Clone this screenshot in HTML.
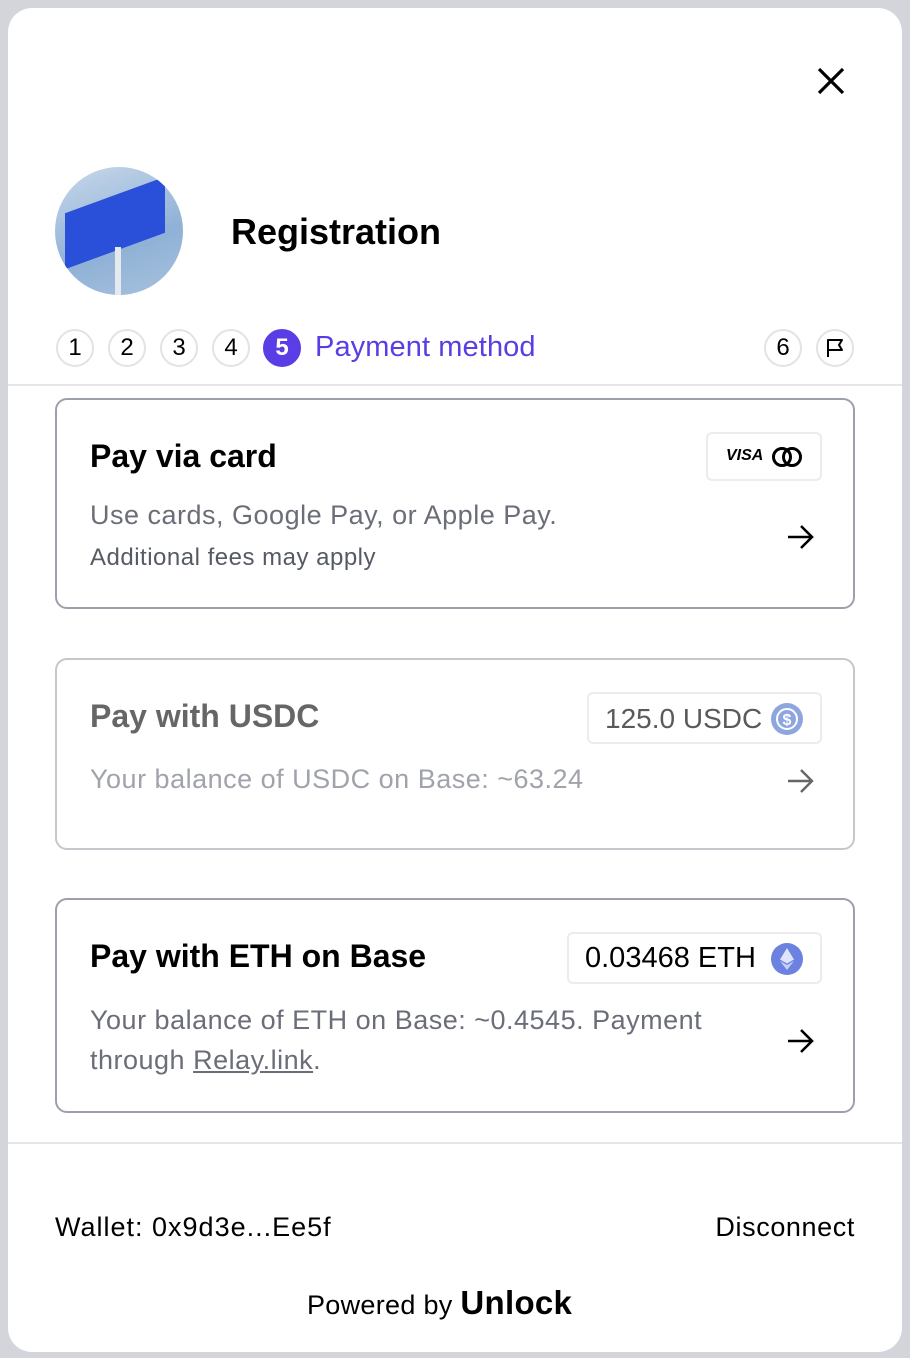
<!DOCTYPE html>
<html><head><style>
*{box-sizing:border-box;margin:0;padding:0}
body{width:910px;height:1358px;background:#d4d5da;font-family:"Liberation Sans",sans-serif;position:relative;overflow:hidden}
.card{position:absolute;left:8px;top:8px;width:894px;height:1344px;background:#fff;border-radius:24px}
.abs{position:absolute}
.step{position:absolute;top:329px;width:38px;height:38px;border:2px solid #e3e3e6;border-radius:50%;font-size:24px;text-align:center;line-height:34px;color:#000}
.box{position:absolute;left:55px;width:800px;border:2px solid #9ca0ad;border-radius:12px;background:#fff}
.pill{position:absolute;border:2px solid #ececef;border-radius:6px;background:#fff}
.t{font-weight:bold;font-size:32px;position:absolute;left:33px}
.g{color:#6b6e78;font-size:27px;position:absolute;left:33px;letter-spacing:0.5px}
</style></head><body>
<div class="card"></div>
<svg class="abs" style="left:816px;top:66px" width="30" height="30" viewBox="0 0 30 30"><path d="M3 3L27 27M27 3L3 27" stroke="#000" stroke-width="3.2"/></svg>
<div class="abs" style="left:55px;top:167px;width:128px;height:128px;border-radius:50%;background:linear-gradient(160deg,#c8d8ea,#8fb1d6 60%,#a7c1de);overflow:hidden">
<div class="abs" style="left:10px;top:28px;width:100px;height:56px;background:#2a4fd8;transform:skewY(-20deg)"></div>
<div class="abs" style="left:60px;top:80px;width:6px;height:48px;background:#e6e9ee"></div></div>
<div class="abs" style="left:231px;top:211px;font-size:36px;font-weight:bold">Registration</div>
<div class="step" style="left:56px">1</div>
<div class="step" style="left:108px">2</div>
<div class="step" style="left:160px">3</div>
<div class="step" style="left:212px">4</div>
<div class="step" style="left:263px;background:#5b3de5;border-color:#5b3de5;color:#fff;font-weight:bold">5</div>
<div class="abs" style="left:315px;top:331px;font-size:29px;color:#5b3de5;letter-spacing:0.1px">Payment method</div>
<div class="step" style="left:764px">6</div>
<div class="step" style="left:816px"><svg width="24" height="24" viewBox="0 0 24 24" style="margin-top:5px"><path d="M5 21V4h14l-3 5 3 5H5" fill="none" stroke="#000" stroke-width="2" stroke-linejoin="round"/></svg></div>
<div class="abs" style="left:8px;top:384px;width:894px;height:2px;background:#e6e6ea"></div>

<div class="box" style="top:398px;height:211px">
<div class="t" style="top:38px;color:#000">Pay via card</div>
<div class="pill" style="left:649px;top:32px;width:116px;height:49px"><span style="position:absolute;left:18px;top:13px;font-weight:bold;font-style:italic;font-size:16px">VISA</span>
<svg class="abs" style="left:62px;top:12px" width="36" height="22"><circle cx="12" cy="11" r="8.5" fill="none" stroke="#000" stroke-width="3"/><circle cx="22" cy="11" r="8.5" fill="none" stroke="#000" stroke-width="3"/></svg></div>
<div class="g" style="top:100px">Use cards, Google Pay, or Apple Pay.</div>
<div class="g" style="top:144px;font-size:24px;color:#555a65;letter-spacing:0.5px">Additional fees may apply</div>
<svg class="abs" style="left:728px;top:122px" width="30" height="30"><path d="M3 15H27M16 4L27 15L16 26" fill="none" stroke="#000" stroke-width="2.6"/></svg>
</div>

<div class="box" style="top:658px;height:192px;border-color:#c5c7cd">
<div class="t" style="top:38px;color:#666">Pay with USDC</div>
<div class="pill" style="left:530px;top:32px;width:235px;height:52px"><span style="position:absolute;left:16px;top:9px;font-size:28px;color:#5a5a5a">125.0 USDC</span>
<svg class="abs" style="left:182px;top:9px" width="32" height="32"><circle cx="16" cy="16" r="16" fill="#8ea6e0"/><circle cx="16" cy="16" r="10" fill="none" stroke="#fff" stroke-width="2"/><text x="16" y="22" font-size="16" fill="#fff" text-anchor="middle" font-family="Liberation Sans" font-weight="bold">$</text></svg></div>
<div class="g" style="top:104px;color:#a0a3ab">Your balance of USDC on Base: ~63.24</div>
<svg class="abs" style="left:728px;top:106px" width="30" height="30"><path d="M3 15H27M16 4L27 15L16 26" fill="none" stroke="#666" stroke-width="2.4"/></svg>
</div>

<div class="box" style="top:898px;height:215px">
<div class="t" style="top:38px;color:#000">Pay with ETH on Base</div>
<div class="pill" style="left:510px;top:32px;width:255px;height:52px"><span style="position:absolute;left:16px;top:8px;font-size:29px;color:#000">0.03468 ETH</span>
<svg class="abs" style="left:202px;top:9px" width="32" height="32"><circle cx="16" cy="16" r="16" fill="#6b82e0"/><path d="M16 5L9 16.5L16 20.5L23 16.5Z" fill="#dfe4fb"/><path d="M9 18L16 27L23 18L16 22Z" fill="#c8d0f7"/></svg></div>
<div class="g" style="top:100px;line-height:40px">Your balance of ETH on Base: ~0.4545. Payment<br>through <span style="text-decoration:underline">Relay.link</span>.</div>
<svg class="abs" style="left:728px;top:126px" width="30" height="30"><path d="M3 15H27M16 4L27 15L16 26" fill="none" stroke="#000" stroke-width="2.6"/></svg>
</div>

<div class="abs" style="left:8px;top:1142px;width:894px;height:2px;background:#e6e6ea"></div>
<div class="abs" style="left:55px;top:1212px;font-size:27px;letter-spacing:1px">Wallet: 0x9d3e...Ee5f</div>
<div class="abs" style="right:55px;top:1212px;font-size:27px;letter-spacing:0.6px">Disconnect</div>
<div class="abs" style="left:307px;top:1284px;font-size:27px;letter-spacing:0.3px">Powered by <b style="font-size:33px;letter-spacing:0.3px">Unlock</b></div>
</body></html>
